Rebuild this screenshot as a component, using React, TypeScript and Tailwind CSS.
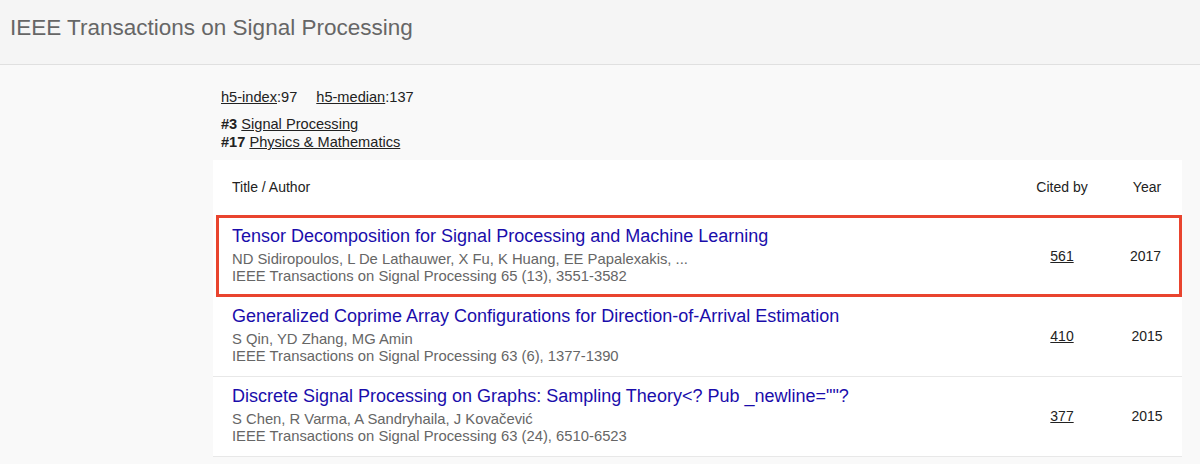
const rows = [
  {
    title: 'Tensor Decomposition for Signal Processing and Machine Learning',
    authors: 'ND Sidiropoulos, L De Lathauwer, X Fu, K Huang, EE Papalexakis, ...',
    venue: 'IEEE Transactions on Signal Processing 65 (13), 3551-3582',
    cited: '561',
    year: '2017',
    marked: true,
  },
  {
    title: 'Generalized Coprime Array Configurations for Direction-of-Arrival Estimation',
    authors: 'S Qin, YD Zhang, MG Amin',
    venue: 'IEEE Transactions on Signal Processing 63 (6), 1377-1390',
    cited: '410',
    year: '2015',
  },
  {
    title: 'Discrete Signal Processing on Graphs: Sampling Theory<? Pub _newline=""?',
    authors: 'S Chen, R Varma, A Sandryhaila, J Kovačević',
    venue: 'IEEE Transactions on Signal Processing 63 (24), 6510-6523',
    cited: '377',
    year: '2015',
  },
];

export default function App() {
  return (
    <div className="min-h-screen bg-[#f9f9f9] font-['Liberation_Sans',Arial,sans-serif] text-[#222]">
      {/* Header */}
      <div className="h-[65px] bg-[#f5f5f5] border-b border-[#e0e0e0] flex items-center px-[10px]">
        <h1 className="text-[22.5px] text-[#666] leading-none -mt-[7px]">IEEE Transactions on Signal Processing</h1>
      </div>

      <div className="ml-[213px] w-[969px]">
        {/* Metrics */}
        <div className="pl-[8px] pt-[23px] pb-[9px] text-[14.6px] leading-[18px]">
          <div className="flex gap-[19px]">
            <span><span className="underline">h5-index</span>:97</span>
            <span><span className="underline">h5-median</span>:137</span>
          </div>
          <div className="mt-[9px]">
            <b>#3</b> <span className="underline">Signal Processing</span>
          </div>
          <div>
            <b>#17</b> <span className="underline">Physics &amp; Mathematics</span>
          </div>
        </div>

        {/* Table */}
        <div className="bg-white">
          <div className="flex items-center h-[55px] text-[14px]">
            <div className="flex-1 pl-[19px]">Title / Author</div>
            <div className="w-[100px] text-center">Cited by</div>
            <div className="w-[70px] text-center">Year</div>
          </div>
          {rows.map((r) => (
            <div
              key={r.cited}
              className={
                r.marked
                  ? 'flex items-center h-[82px] border-[3px] border-[#e9442e] ml-[3px]'
                  : 'flex items-center h-[81px] border-b border-[#e8e8e8] -mt-[1px] first:mt-0'
              }
            >
              <div className={r.marked ? 'flex-1 pl-[13px]' : 'flex-1 pl-[19px]'}>
                <div className="text-[18px] leading-[20px] text-[#1a0dab] -mt-[1px]">{r.title}</div>
                <div className="text-[14.8px] leading-[17px] text-[#666] mt-[5px]">{r.authors}</div>
                <div className="text-[14.8px] leading-[17px] text-[#666]">{r.venue}</div>
              </div>
              <div className="w-[100px] text-center text-[14px] underline">{r.cited}</div>
              <div className={r.marked ? 'w-[67px] text-center text-[14px]' : 'w-[70px] text-center text-[14px]'}>{r.year}</div>
            </div>
          ))}
        </div>
      </div>
    </div>
  );
}
